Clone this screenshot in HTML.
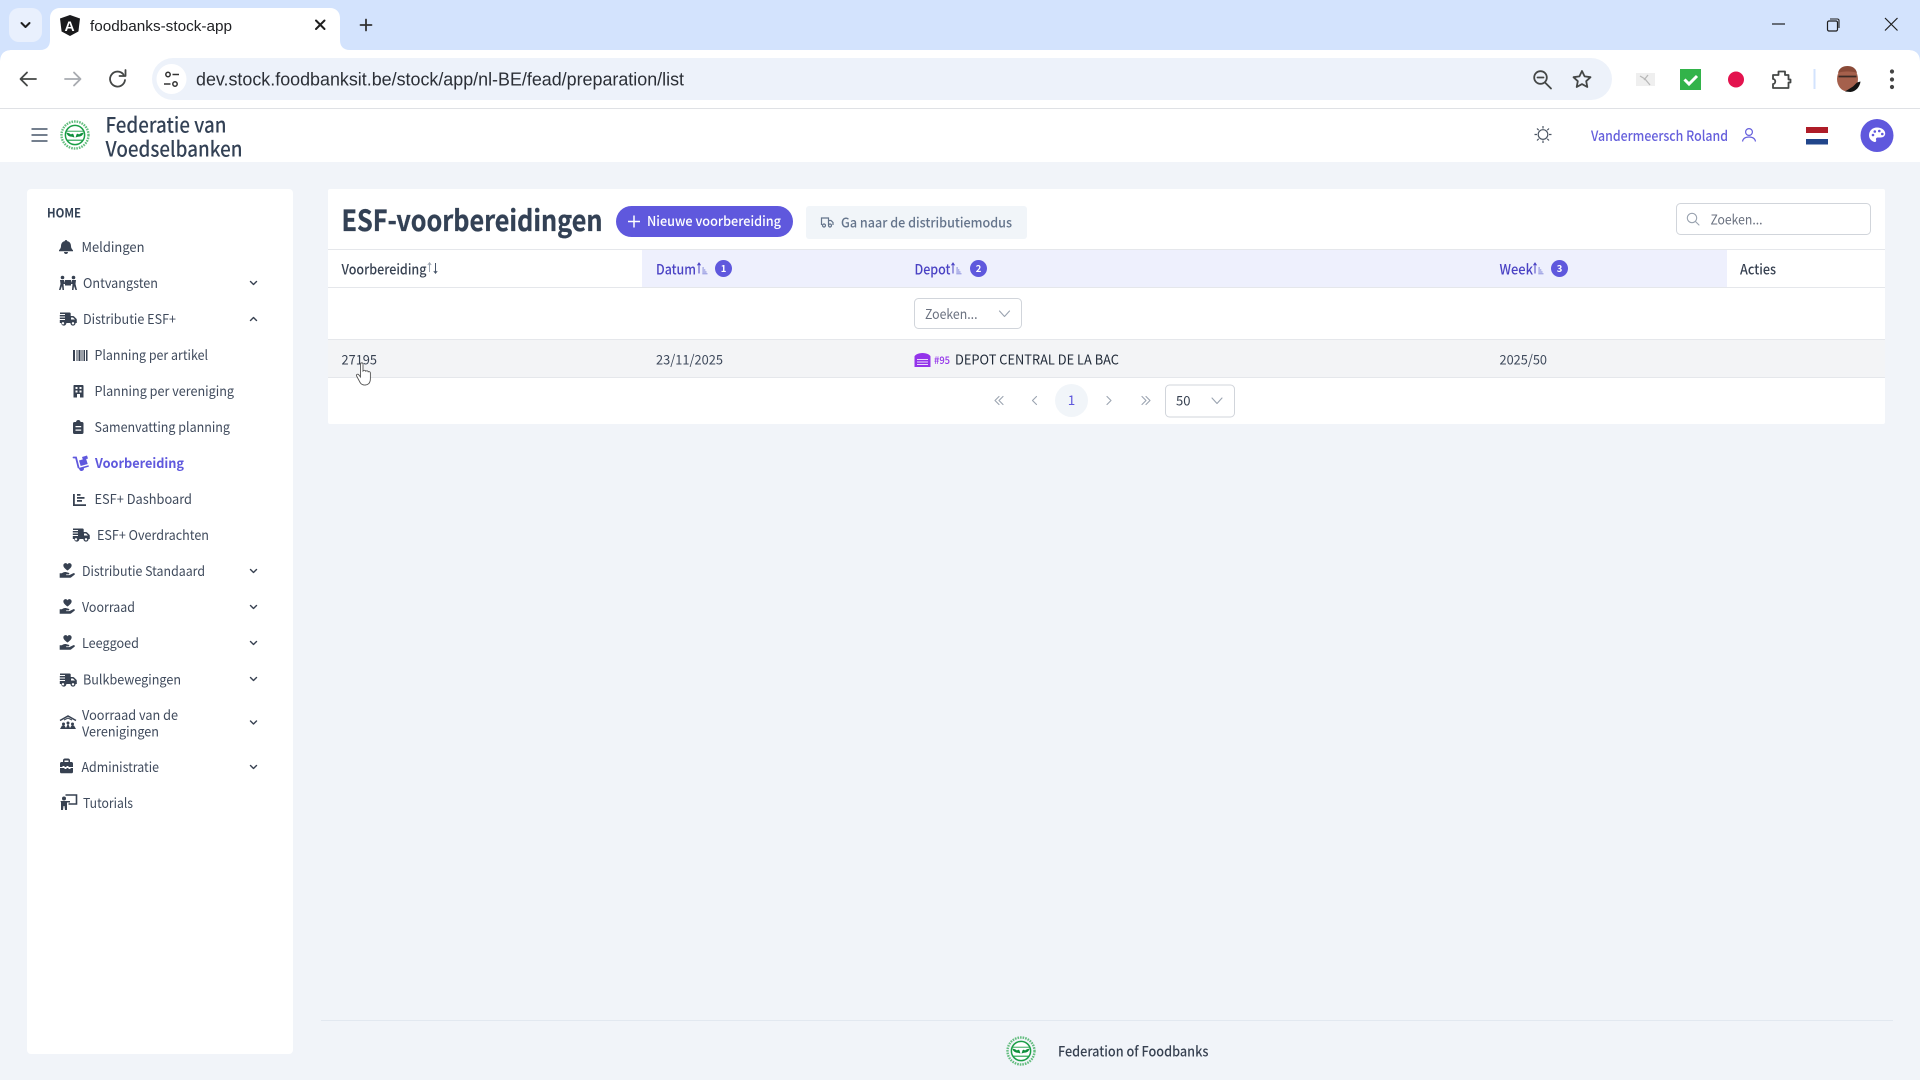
<!DOCTYPE html>
<html lang="nl"><head><meta charset="utf-8"><title>foodbanks-stock-app</title>
<style>
html,body{margin:0;padding:0;width:1920px;height:1080px;overflow:hidden;background:#f1f4f9}
svg{display:block;position:absolute;left:0;top:0}
text{font-family:"Noto Sans CJK SC","Liberation Sans",sans-serif;font-size:13.5px;fill:#3f4a5c;white-space:pre}
.c{font-family:"Liberation Sans",sans-serif;fill:#202124}
.th{font-size:14px;fill:#374151;font-weight:500}
.p{fill:#4a42c4;font-size:14px;font-weight:500}
.i{fill:#374151}
.ch{fill:none;stroke:#374151;stroke-width:1.4;stroke-linecap:round;stroke-linejoin:round}
.gr{fill:none;stroke:#9aa3b0;stroke-width:1.1;stroke-linecap:round;stroke-linejoin:round}
.bd{fill:#fff;stroke:#d1d5db;stroke-width:1}
.tb{fill:none;stroke:#444746;stroke-width:1.8;stroke-linecap:round;stroke-linejoin:round}
</style></head><body>
<svg width="1920" height="1080" viewBox="0 0 1920 1080" xmlns="http://www.w3.org/2000/svg">
<defs>
<g id="truck"><path d="M-8-6.5h9.5c.8 0 1.2.5 1.2 1.1V-3h2.2c.5 0 .9.2 1.2.5L8.4-.2c.3.3.4.7.4 1.1V4H7.6a2.6 2.6 0 0 1-5.2 0h-4a2.6 2.6 0 0 1-5.2 0H-8.2V1h5.2V0h-5.2V-1.5h5.2v-1h-5.2V-4h5.2v-1H-8zM3-1.5V.5h4L5-1.5z"/><circle cx="-5" cy="4.3" r="1.2" fill="#fff"/><circle cx="5" cy="4.3" r="1.2" fill="#fff"/></g>
<g id="hand" transform="scale(.92)"><path d="M2-8.500c-1 0-1.700.6-2 1.300C-.3-7.900-1-8.500-2-8.500c-1.500 0-2.500 1.200-2.500 2.500C-4.500-3.700-1.500-1.700 0-.5 1.500-1.700 4.500-3.700 4.500-6 4.500-7.300 3.500-8.500 2-8.500z"/><path d="M-8.500 2.500h2.300L-4.500 1.500C-3.500 1-2 1-1 1.300L1.500 2c.7.200.8 1.700-.5 1.700H-1.500v.8H2L6.200 2.400c1.300-.6 2.400.9 1.400 1.700L3.800 7c-.4.300-.8.400-1.300.4H-8.500z"/></g>
<g id="chev"><path class="ch" d="M-3-1.500 0 1.500 3-1.500" stroke-width="1.300"/></g>
<g id="sort"><path d="M2.500 5V-5M1-3.200 2.500-5.500 4-3.200" fill="none" stroke="#4a42c4" stroke-width="1"/><path d="M5.800-.5h1.700M5.800 1.500h3M5.800 3.500h4.200M5.800 5.300h5.200" stroke="#7b7fd8" stroke-width=".9" fill="none"/></g>
<g id="logo">
<circle r="13.500" fill="none" stroke="#3fae5f" stroke-width="2.400" stroke-dasharray="1.600 1" opacity=".8"/>
<circle r="9.600" fill="#fff" stroke="#1a9e46" stroke-width="1.500"/>
<path d="M-9 -3.800H9" stroke="#1a9e46" stroke-width=".9"/>
<path d="M-8.500-2.200c2 .1 3.200.6 4.500 1.700.6-.8 1.500-1 2.300-.5L-.5 2.500-3 1.800c-3 0-5-1.500-5.500-4zM8.500-2.200c-2 .1-3.200.6-4.500 1.700-.6-.8-1.500-1-2.300-.5L.5 2.500 3 1.800c3 0 5-1.500 5.500-4z" fill="#0f8f3c"/>
<path d="M-7.500 5.200h15" stroke="#1a9e46" stroke-width="1.100"/>
</g>
</defs>

<!-- Browser chrome -->
<rect width="1920" height="50" fill="#d3e3fd"/>
<rect x="9" y="8" width="33" height="34" rx="10" fill="#e9f0fd"/>
<path class="ch" d="M21.500 23l4 4 4-4" stroke="#1f1f1f" stroke-width="2" style="stroke:#1f1f1f;stroke-width:2"/>
<path d="M40 50c7 0 10-4 10-10V18c0-6 4-10 10-10h270c6 0 10 4 10 10v22c0 6 3 10 10 10z" fill="#fff"/>
<path d="M70 15l10 3.500-1.600 13L70 36l-8.400-4.500-1.600-13z" fill="#1a1a1c"/>
<text x="64.500" y="31" style="font:bold 14px 'Liberation Sans',sans-serif;fill:#fff">A</text>
<text class="c" x="90" y="31" style="font-size:15px" textLength="142" lengthAdjust="spacingAndGlyphs">foodbanks-stock-app</text>
<path d="M316 20.500l8.500 8.500M324.500 20.500L316 29" stroke="#1f1f1f" stroke-width="2" stroke-linecap="round"/>
<path d="M366 19.500v11M360.500 25h11" stroke="#333" stroke-width="1.800" stroke-linecap="round"/>
<path d="M1772 24h13" stroke="#1f1f1f" stroke-width="1.200"/>
<rect x="1827.500" y="21" width="10" height="10" rx="1.500" fill="none" stroke="#1f1f1f" stroke-width="1.200"/><path d="M1830 19h7.500c.8 0 1.500.7 1.500 1.500V28" fill="none" stroke="#1f1f1f" stroke-width="1.100"/>
<path d="M1885 18l12.500 12.500M1897.500 18L1885 30.500" stroke="#1f1f1f" stroke-width="1.200"/>

<path d="M0 108V62c0-8 4-12 12-12h1896c8 0 12 4 12 12v46z" fill="#fff"/>
<path d="M0 50h12c-8 0-12 4-12 12zM1920 50h-12c8 0 12 4 12 12z" fill="#d3e3fd"/>
<rect y="108" width="1920" height="1" fill="#dfe1e5"/>
<path class="tb" d="M36 79H21M27 72.500L20.500 79l6.500 6.500"/>
<path class="tb" d="M65 79h15M74 72.500l6.500 6.500-6.500 6.500" style="stroke:#a8abb0"/>
<path class="tb" d="M123.500 74.500a7.500 7.500 0 1 0 1.500 5.500M125.500 70v6h-6"/>
<rect x="152" y="58" width="1460" height="42" rx="21" fill="#edf2fa"/>
<circle cx="171.500" cy="79" r="15" fill="#fff"/>
<circle cx="168" cy="74.500" r="2.200" fill="none" stroke="#333" stroke-width="1.500"/><path d="M172.500 74.500h6.500M164 84h6.500" stroke="#333" stroke-width="1.500"/><circle cx="175" cy="84" r="2.200" fill="none" stroke="#333" stroke-width="1.500"/>
<text class="c" x="196" y="85.500" style="font-size:18px;fill:#2b2f36" textLength="488" lengthAdjust="spacingAndGlyphs">dev.stock.foodbanksit.be/stock/app/nl-BE/fead/preparation/list</text>
<circle cx="1540.500" cy="77.500" r="6.300" class="tb"/><path class="tb" d="M1545 82.500l6 6M1537.500 77.500h6"/>
<path class="tb" d="M1582 71l2.600 5.400 5.900.8-4.300 4 1.100 5.800-5.300-2.900-5.300 2.900 1.100-5.800-4.300-4 5.900-.8z"/>
<rect x="1636" y="73" width="19" height="13" fill="#efefef"/><path d="M1640 76l5 3 5 6M1648 75l-4 5" stroke="#b9b9b9" stroke-width="1.300" fill="none"/>
<rect x="1680" y="69" width="21" height="21" fill="#32b34a"/><path d="M1684.500 79.500l4.500 4.500 8-8" fill="none" stroke="#fff" stroke-width="3"/>
<circle cx="1736" cy="79.500" r="8" fill="#e3134e"/>
<path class="tb" d="M1773 75h5.500v-3.500h6.500V75h3.500v4.500h2v3h-2v5.500H1773v-4c3 0 3-5 0-5z"/>
<rect x="1813.500" y="69" width="2" height="20" fill="#d3e3fd"/>
<ellipse cx="1847.500" cy="79" rx="10.500" ry="12.500" fill="#a5604c"/>
<path d="M1838 73c1-5 5-7 9.500-7s8.500 2 9.500 7c-3-2-16-2-19 0z" fill="#8a4a38"/>
<path d="M1838.500 76.500h18" stroke="#3b2a25" stroke-width="1.800"/>
<path d="M1845 91.500l8-5 4-4 3.500-1c-.5 5-4.500 10-10 10.500z" fill="#141414"/>
<circle cx="1892" cy="71.500" r="2.100" fill="#444"/><circle cx="1892" cy="79.500" r="2.100" fill="#444"/><circle cx="1892" cy="87" r="2.100" fill="#444"/>

<!-- App header -->
<rect y="109" width="1920" height="53" fill="#fff"/>
<path d="M31.500 129h16M31.500 135h16M31.500 141h16" stroke="#475569" stroke-width="1.600"/>
<use href="#logo" x="75" y="135"/>
<text x="105.500" y="132.500" style="font-size:21px;fill:#334155;font-weight:500" textLength="121" lengthAdjust="spacingAndGlyphs">Federatie van</text>
<text x="105.500" y="156.500" style="font-size:21px;fill:#334155;font-weight:500" textLength="137" lengthAdjust="spacingAndGlyphs">Voedselbanken</text>
<circle cx="1543" cy="134.500" r="4.800" fill="none" stroke="#4b5563" stroke-width="1.200"/>
<path d="M1543 126v2.500M1543 140.500v2.500M1534.500 134.500h2.500M1549 134.500h2.500M1537 128.500l1.700 1.700M1547.300 138.800l1.700 1.700M1549 128.500l-1.700 1.700M1538.700 138.800l-1.700 1.700" stroke="#4b5563" stroke-width="1.200"/>
<text x="1591" y="141" style="fill:#655fdc;font-size:14px;font-weight:500" textLength="137" lengthAdjust="spacingAndGlyphs">Vandermeersch Roland</text>
<circle cx="1749" cy="132" r="3.400" fill="none" stroke="#655fdc" stroke-width="1.200"/><path d="M1742.500 141.500c.5-3 3-4.500 6.500-4.500s6 1.500 6.500 4.500" fill="none" stroke="#655fdc" stroke-width="1.200"/>
<rect x="1806" y="127" width="22" height="6" fill="#ae1c28"/><rect x="1806" y="133" width="22" height="6" fill="#fff"/><rect x="1806" y="139" width="22" height="5.500" fill="#21468b"/>
<circle cx="1877" cy="135.500" r="16.500" fill="#5f58dd"/>
<path d="M1877 127.500c-4.600 0-8 3.400-8 7.800 0 3.300 2.300 5.800 5.300 6.700 1.500.3 2.200-.7 1.800-2-.5-1.400.3-2.500 1.800-2.500h2.800c2.500 0 4.500-1.500 4.500-4 0-3.400-3.600-6-8.200-6z" fill="#fff"/>
<circle cx="1873" cy="135" r="1.300" fill="#5f58dd"/><circle cx="1874.800" cy="131.500" r="1.300" fill="#5f58dd"/><circle cx="1879.300" cy="131" r="1.300" fill="#5f58dd"/><circle cx="1882.300" cy="134" r="1.300" fill="#5f58dd"/>

<!-- Sidebar -->
<rect x="27" y="189" width="266" height="865" rx="4" fill="#fff"/>
<text x="47" y="217.500" style="font-size:12.500px;font-weight:700;fill:#334155" textLength="34" lengthAdjust="spacingAndGlyphs">HOME</text>

<path class="i" transform="translate(66 247)" d="M0-7c.8 0 1.200.5 1.200 1.100 2.600.5 3.800 2.600 3.800 5 0 2 1 3 2 4.200v1H-7v-1C-6 2-5 1-5-.9c0-2.400 1.200-4.500 3.800-5C-1.200-6.500-.8-7 0-7zM-2 5h4c0 1.200-.9 2-2 2s-2-.8-2-2z"/>
<text x="81.500" y="252" textLength="63" lengthAdjust="spacingAndGlyphs">Meldingen</text>

<g class="i" transform="translate(68 283)"><circle cx="-5.500" cy="-5.500" r="1.800"/><circle cx="5.500" cy="-5.500" r="1.800"/><rect x="-3" y="-3" width="6" height="5.500"/><path d="M-8-3h4L-3 0v1L-4.500 1l.5 6H-5.500L-6 3-7.500 7H-9L-7.500 1zM8-3H4L3 0v1h1.500L4 7h1.500L6 3 7.500 7H9L7.500 1z"/></g>
<text x="83" y="288" textLength="75" lengthAdjust="spacingAndGlyphs">Ontvangsten</text>
<use href="#chev" x="253.500" y="283"/>

<use href="#truck" class="i" x="68" y="319"/>
<text x="83" y="324" textLength="93" lengthAdjust="spacingAndGlyphs">Distributie ESF+</text>
<path class="ch" d="M250.500 320.500l3-3 3 3" stroke-width="1.300"/>

<path class="i" d="M73 350h2v11h-2zM76.500 350h1v11h-1zM78.500 350h2v11h-2zM81.500 350h1v11h-1zM83.500 350h1.500v11h-1.500zM86 350h1.500v11H86z"/>
<text x="94.500" y="360" textLength="113.500" lengthAdjust="spacingAndGlyphs">Planning per artikel</text>

<path class="i" fill-rule="evenodd" d="M74 385h8.500c.8 0 1 .5 1 1v11.500h-3.500V394h-3v3.500h-3.500V386c0-.5.200-1 .5-1zM75.500 387v2h2v-2zM79.500 387v2h2v-2zM75.500 390.500v2h2v-2zM79.500 390.500v2h2v-2z"/>
<text x="94.500" y="396" textLength="139.500" lengthAdjust="spacingAndGlyphs">Planning per vereniging</text>

<path class="i" fill-rule="evenodd" d="M74.500 422h1.500c.3-1.300 1-2 2.300-2s2 .7 2.300 2h1.400c.9 0 1.500.6 1.500 1.500v9c0 .9-.6 1.500-1.500 1.500h-7.500c-.9 0-1.500-.6-1.500-1.500v-9c0-.9.600-1.500 1.500-1.500zM75.500 426v1.200h5.700V426zM75.500 429.500v1.200h5.700v-1.200z"/>
<text x="94.500" y="432" textLength="135.500" lengthAdjust="spacingAndGlyphs">Samenvatting planning</text>

<path d="M73.500 457.500h2.500l2.500 10" fill="none" stroke="#5f58dd" stroke-width="1.800" stroke-linecap="round"/>
<path d="M79 460.500l7-2 1.700 5.500-7 2zM78.500 468l10-2.800.4 1.400-5 1.500a2.400 2.400 0 0 1-4.600 1.300z" fill="#5f58dd"/><path d="M82 457l5-1.500 1 3-5 1.500z" fill="#5f58dd"/>
<text x="95" y="468" style="font-weight:700;fill:#5f58dd" textLength="89" lengthAdjust="spacingAndGlyphs">Voorbereiding</text>

<path class="i" d="M73 494h1.800v10.200H86v1.800H73zM77 497h7.500v1.700H77zM77 500h5v1.700h-5zM77 494h3.500v1.700H77z"/>
<text x="94.500" y="504" textLength="97.500" lengthAdjust="spacingAndGlyphs">ESF+ Dashboard</text>

<use href="#truck" class="i" x="81" y="535"/>
<text x="97" y="540" textLength="112" lengthAdjust="spacingAndGlyphs">ESF+ Overdrachten</text>

<use href="#hand" class="i" x="67.500" y="571"/>
<text x="82" y="576" textLength="123" lengthAdjust="spacingAndGlyphs">Distributie Standaard</text>
<use href="#chev" x="253.500" y="571"/>

<use href="#hand" class="i" x="67.500" y="607"/>
<text x="82" y="612" textLength="53" lengthAdjust="spacingAndGlyphs">Voorraad</text>
<use href="#chev" x="253.500" y="607"/>

<use href="#hand" class="i" x="67.500" y="643"/>
<text x="82" y="648" textLength="57" lengthAdjust="spacingAndGlyphs">Leeggoed</text>
<use href="#chev" x="253.500" y="643"/>

<use href="#truck" class="i" x="68" y="680"/>
<text x="83" y="684.500" textLength="98" lengthAdjust="spacingAndGlyphs">Bulkbewegingen</text>
<use href="#chev" x="253.500" y="679"/>

<g class="i" transform="translate(68 723)"><path d="M-8-2.500L0-7l8 4.500" fill="none" stroke="#374151" stroke-width="1.500"/><path d="M-4-3L0-5l4 2" fill="none" stroke="#374151" stroke-width="1"/><circle cx="-4.500" cy="1" r="1.500"/><circle cx="0" cy="0" r="1.500"/><circle cx="4.500" cy="1" r="1.500"/><path d="M-8 6l2-3.500h2.500L-2 5l1.500-3.500h1L2 5l1.500-2.500H6L8 6z"/></g>
<text x="82" y="720" textLength="96" lengthAdjust="spacingAndGlyphs">Voorraad van de</text>
<text x="82" y="736.500" textLength="77" lengthAdjust="spacingAndGlyphs">Verenigingen</text>
<use href="#chev" x="253.500" y="722.500"/>

<path class="i" fill-rule="evenodd" transform="translate(-2 0)" d="M62 763.500c0-1 .8-1.500 1.500-1.500H65v-1.500c0-1.200.9-2 2-2h3c1.100 0 2 .8 2 2V762h1.500c.7 0 1.500.5 1.500 1.500V767h-4.500v-1h-2v1h-2v-1h-2v1H62zM66.500 760.500V762h4v-1.500zM62 768h4.500v1h2v-1h2v1h2v-1H75v4c0 .7-.6 1.300-1.500 1.300h-10c-.9 0-1.500-.6-1.500-1.300z"/>
<text x="81.500" y="772" textLength="77.500" lengthAdjust="spacingAndGlyphs">Administratie</text>
<use href="#chev" x="253.500" y="767"/>

<g transform="translate(69 803)"><circle cx="-5" cy="-4.500" r="2" class="i"/><path class="i" d="M-8.500-2h5.500l4 0v1.500H-2V7h-2L-4.500 3h-1L-6 7h-2V-.5z"/><path d="M-3.500-8H7.500V1H-.5" fill="none" stroke="#374151" stroke-width="1.600"/></g>
<text x="83" y="808" textLength="50" lengthAdjust="spacingAndGlyphs">Tutorials</text>

<!-- Card -->
<rect x="328" y="189" width="1557" height="235" rx="2" fill="#fff"/>
<text x="341.500" y="231" style="font-size:29px;font-weight:700;fill:#334155;stroke:#334155;stroke-width:.3" textLength="261" lengthAdjust="spacingAndGlyphs">ESF-voorbereidingen</text>
<rect x="616" y="206" width="177" height="31" rx="15.500" fill="#5f58dd"/>
<path d="M634 215.500v12M628 221.500h12" stroke="#fff" stroke-width="1.500"/>
<text x="647" y="226" style="fill:#fff;font-weight:500;font-size:13.500px" textLength="134" lengthAdjust="spacingAndGlyphs">Nieuwe voorbereiding</text>
<rect x="806" y="206" width="221" height="33" rx="3" fill="#f1f5f9"/>
<g fill="none" stroke="#64748b" stroke-width="1.200" transform="translate(827 222.500)"><path d="M-5.500 2.500V-4.500h7V2.500M1.500-2h2.500l2 2v2.500"/><circle cx="-3" cy="3" r="1.500"/><circle cx="3" cy="3" r="1.500"/></g>
<text x="841" y="227.500" style="fill:#64748b;font-weight:500" textLength="171" lengthAdjust="spacingAndGlyphs">Ga naar de distributiemodus</text>

<rect x="1676.500" y="203.500" width="194" height="31" rx="4" class="bd"/>
<circle cx="1692" cy="218" r="4.700" class="gr"/><path class="gr" d="M1695.500 221.500l3.500 3.500"/>
<text x="1710.500" y="224.500" style="fill:#6b7280" textLength="52" lengthAdjust="spacingAndGlyphs">Zoeken...</text>

<!-- Table -->
<rect x="642" y="250" width="1085" height="37" fill="#eef0fd"/>
<path d="M328 249.500h1557M328 287.500h1557M328 339.500h1557M328 377.500h1557" stroke="#e5e7eb" stroke-width="1"/>
<rect x="328" y="340" width="1557" height="37" fill="#f3f4f6"/>

<text class="th" x="341.500" y="274.500" textLength="85" lengthAdjust="spacingAndGlyphs">Voorbereiding</text>
<path d="M429.500 272V263M427.800 265l1.700-2.200 1.700 2.200" fill="none" stroke="#9aa3b0" stroke-width="1"/>
<path d="M435.500 263v10M433.800 271l1.700 2.200 1.700-2.200" fill="none" stroke="#475569" stroke-width="1"/>
<text class="p" x="656" y="274.500" textLength="40" lengthAdjust="spacingAndGlyphs">Datum</text>
<use href="#sort" x="696.500" y="268.500"/>
<circle cx="723.500" cy="268.500" r="8.500" fill="#5f58dd"/><text x="723.500" y="272" text-anchor="middle" style="font-size:9.500px;font-weight:700;fill:#fff">1</text>
<text class="p" x="914.500" y="274.500" textLength="36" lengthAdjust="spacingAndGlyphs">Depot</text>
<use href="#sort" x="950.500" y="268.500"/>
<circle cx="978.500" cy="268.500" r="8.500" fill="#5f58dd"/><text x="978.500" y="272" text-anchor="middle" style="font-size:9.500px;font-weight:700;fill:#fff">2</text>
<text class="p" x="1499.500" y="274.500" textLength="33.500" lengthAdjust="spacingAndGlyphs">Week</text>
<use href="#sort" x="1532.500" y="268.500"/>
<circle cx="1559.500" cy="268.500" r="8.500" fill="#5f58dd"/><text x="1559.500" y="272" text-anchor="middle" style="font-size:9.500px;font-weight:700;fill:#fff">3</text>
<text class="th" x="1740" y="274.500" textLength="36" lengthAdjust="spacingAndGlyphs">Acties</text>

<rect x="914.500" y="298.500" width="107" height="30" rx="4" class="bd"/>
<text x="925" y="319" style="fill:#6b7280" textLength="52.500" lengthAdjust="spacingAndGlyphs">Zoeken...</text>
<path class="gr" d="M999.500 311l5 5.500 5-5.500"/>

<text x="341.500" y="364.500" style="fill:#374151" textLength="35.500" lengthAdjust="spacingAndGlyphs">27195</text>
<text x="656" y="364.500" textLength="67" lengthAdjust="spacingAndGlyphs">23/11/2025</text>
<path d="M914.500 356.500c0-1.200 3.500-3.500 8-3.500s8 2.300 8 3.500V367h-16z" fill="#9333ea"/><path d="M917 359.500h11M917 362h11M917 364.500h11" stroke="#eadcfb" stroke-width="1"/>
<text x="934" y="364" style="font-size:10.500px;font-weight:500;fill:#9333ea" textLength="16" lengthAdjust="spacingAndGlyphs">#95</text>
<text x="955" y="364.500" style="fill:#1f2937" textLength="164" lengthAdjust="spacingAndGlyphs">DEPOT CENTRAL DE LA BAC</text>
<text x="1499.500" y="364.500" textLength="47.500" lengthAdjust="spacingAndGlyphs">2025/50</text>

<!-- Pointer -->
<path d="M360.500 364c0-1.500 2.500-1.500 2.500 0v7c1-1 2.400-.8 2.700.2.900-.7 2.300-.4 2.500.6 1-.5 2.200 0 2.200 1.200v5.500c0 3.500-1.500 6.200-5 6.500-3 .2-4.300-.8-5.300-2.500l-3.500-6.500c-.7-1.400 1-2.500 2.100-1.300l1.800 2.300z" fill="#fff" fill-opacity=".9" stroke="#555" stroke-width=".9"/>

<!-- Pagination -->
<path class="gr" d="M999 396.500l-4 4 4 4M1003 396.500l-4 4 4 4M1036.500 396.500l-4 4 4 4M1107 396.500l4 4-4 4M1142 396.500l4 4-4 4M1146 396.500l4 4-4 4"/>
<circle cx="1071.500" cy="400.500" r="16.500" fill="#f1f5f9"/>
<text x="1071.500" y="405" text-anchor="middle" style="fill:#5f58dd">1</text>
<rect x="1165.500" y="385" width="69" height="32" rx="4" class="bd"/>
<text x="1176" y="405.500" style="fill:#374151" textLength="14.500" lengthAdjust="spacingAndGlyphs">50</text>
<path class="gr" d="M1212 398l5 5.500 5-5.500"/>

<!-- Footer -->
<rect x="321" y="1020" width="1572" height="1" fill="#e2e8f0"/>
<use href="#logo" x="1021" y="1051"/>
<text x="1058" y="1056.500" style="font-size:14px;font-weight:500;fill:#374151" textLength="150.500" lengthAdjust="spacingAndGlyphs">Federation of Foodbanks</text>
</svg>
</body></html>
